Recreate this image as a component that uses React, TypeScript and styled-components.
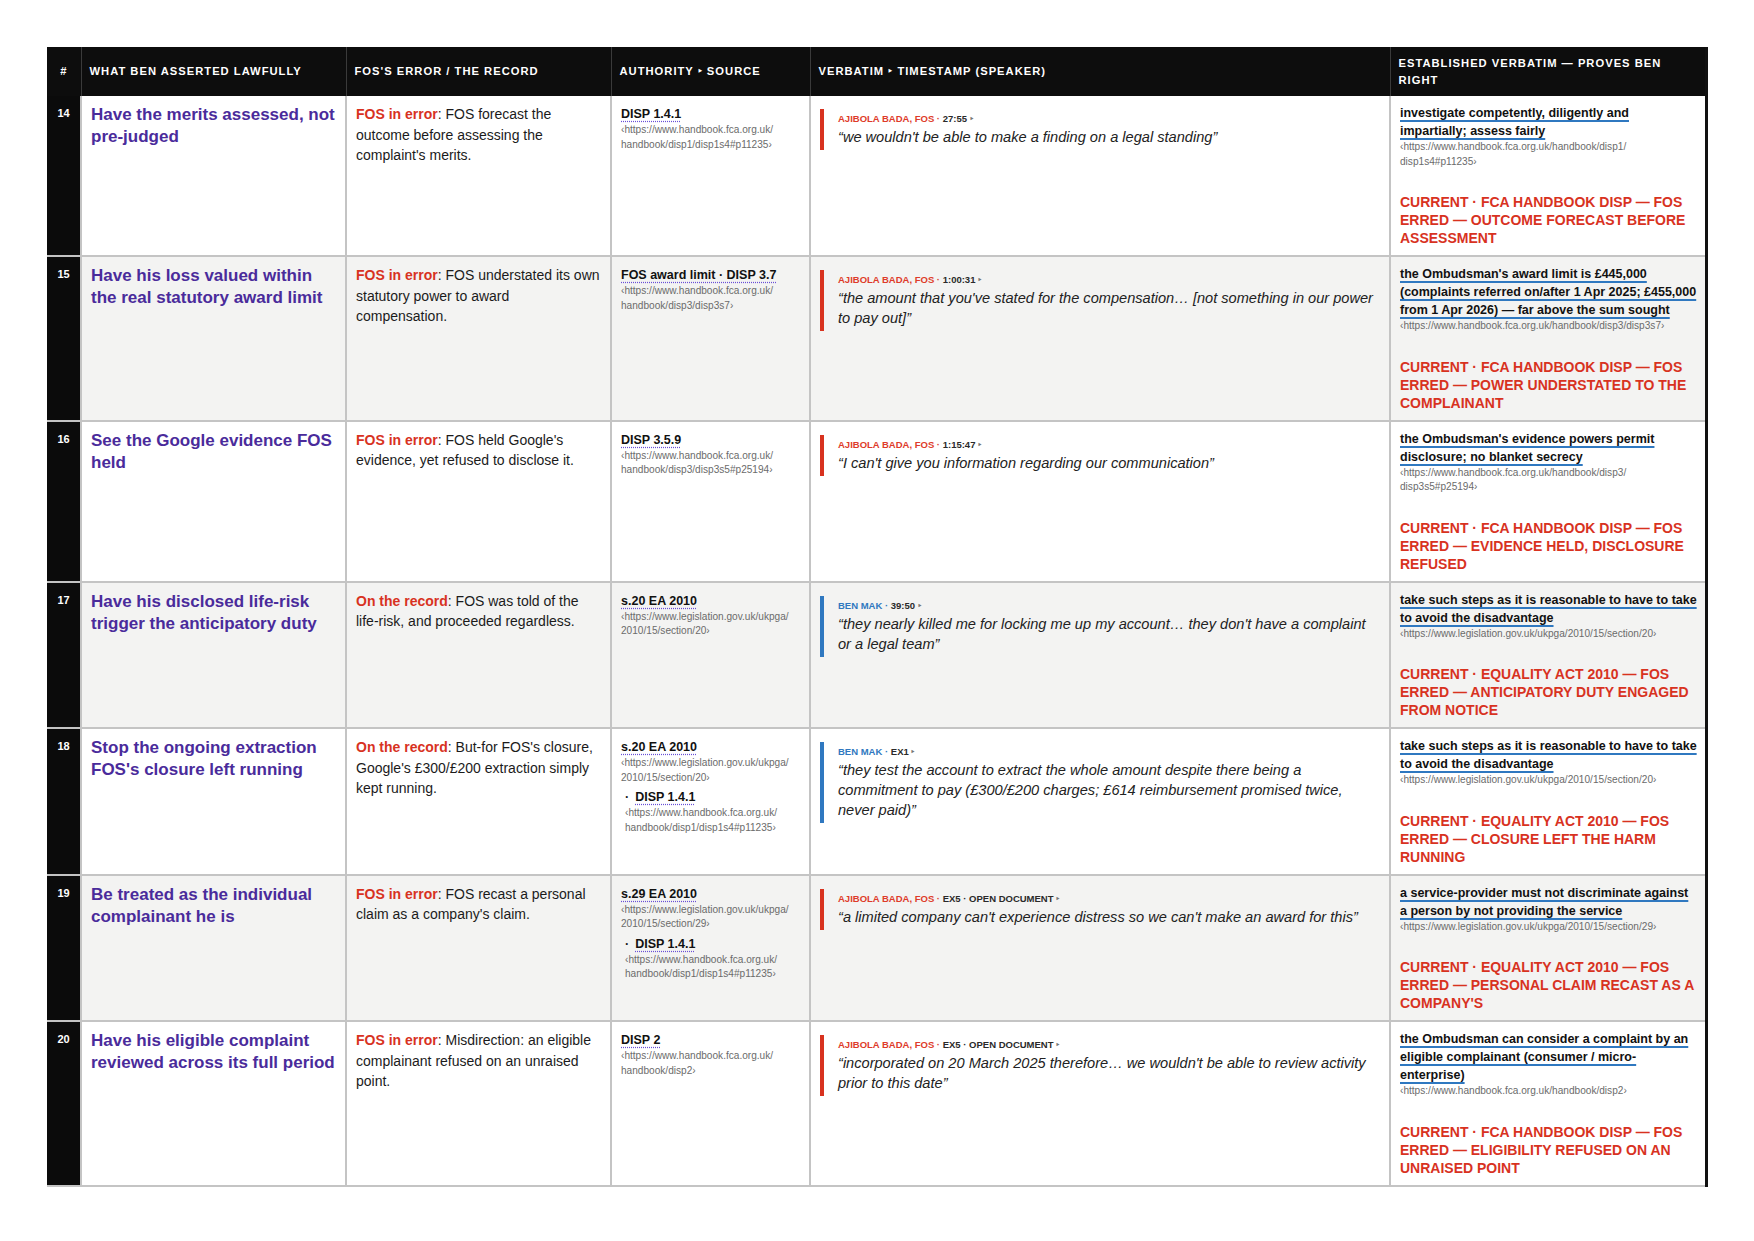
import React from 'react';
import styled, { createGlobalStyle } from 'styled-components';

const RED = '#d8321f';
const BLUE = '#2f78c0';
const PURPLE = '#4a2b9b';

type Speaker = 'fos' | 'ben';

interface Authority {
  title: string;
  url: string;
}

interface Row {
  n: number;
  claim: string;
  tag: string;
  error: string;
  authorities: Authority[];
  speaker: Speaker;
  stamp: string;
  quote: string;
  established: string;
  estUrl: string;
  verdict: string;
}

const FCA1 = 'https://www.handbook.fca.org.uk/handbook/disp1/disp1s4#p11235';
const S20 = 'https://www.legislation.gov.uk/ukpga/2010/15/section/20';

const rows: Row[] = [
  {
    n: 14,
    claim: 'Have the merits assessed, not pre-judged',
    tag: 'FOS in error',
    error: 'FOS forecast the outcome before assessing the complaint\'s merits.',
    authorities: [{ title: 'DISP 1.4.1', url: FCA1 }],
    speaker: 'fos',
    stamp: '27:55',
    quote: 'we wouldn\'t be able to make a finding on a legal standing',
    established: 'investigate competently, diligently and impartially; assess fairly',
    estUrl: FCA1,
    verdict: 'CURRENT · FCA HANDBOOK DISP — FOS ERRED — OUTCOME FORECAST BEFORE ASSESSMENT',
  },
  {
    n: 15,
    claim: 'Have his loss valued within the real statutory award limit',
    tag: 'FOS in error',
    error: 'FOS understated its own statutory power to award compensation.',
    authorities: [
      { title: 'FOS award limit · DISP 3.7', url: 'https://www.handbook.fca.org.uk/handbook/disp3/disp3s7' },
    ],
    speaker: 'fos',
    stamp: '1:00:31',
    quote: 'the amount that you\'ve stated for the compensation… [not something in our power to pay out]',
    established:
      'the Ombudsman\'s award limit is £445,000 (complaints referred on/after 1 Apr 2025; £455,000 from 1 Apr 2026) — far above the sum sought',
    estUrl: 'https://www.handbook.fca.org.uk/handbook/disp3/disp3s7',
    verdict: 'CURRENT · FCA HANDBOOK DISP — FOS ERRED — POWER UNDERSTATED TO THE COMPLAINANT',
  },
  {
    n: 16,
    claim: 'See the Google evidence FOS held',
    tag: 'FOS in error',
    error: 'FOS held Google\'s evidence, yet refused to disclose it.',
    authorities: [
      { title: 'DISP 3.5.9', url: 'https://www.handbook.fca.org.uk/handbook/disp3/disp3s5#p25194' },
    ],
    speaker: 'fos',
    stamp: '1:15:47',
    quote: 'I can\'t give you information regarding our communication',
    established: 'the Ombudsman\'s evidence powers permit disclosure; no blanket secrecy',
    estUrl: 'https://www.handbook.fca.org.uk/handbook/disp3/disp3s5#p25194',
    verdict: 'CURRENT · FCA HANDBOOK DISP — FOS ERRED — EVIDENCE HELD, DISCLOSURE REFUSED',
  },
  {
    n: 17,
    claim: 'Have his disclosed life-risk trigger the anticipatory duty',
    tag: 'On the record',
    error: 'FOS was told of the life-risk, and proceeded regardless.',
    authorities: [{ title: 's.20 EA 2010', url: S20 }],
    speaker: 'ben',
    stamp: '39:50',
    quote: 'they nearly killed me for locking me up my account… they don\'t have a complaint or a legal team',
    established: 'take such steps as it is reasonable to have to take to avoid the disadvantage',
    estUrl: S20,
    verdict: 'CURRENT · EQUALITY ACT 2010 — FOS ERRED — ANTICIPATORY DUTY ENGAGED FROM NOTICE',
  },
  {
    n: 18,
    claim: 'Stop the ongoing extraction FOS\'s closure left running',
    tag: 'On the record',
    error: 'But-for FOS\'s closure, Google\'s £300/£200 extraction simply kept running.',
    authorities: [
      { title: 's.20 EA 2010', url: S20 },
      { title: 'DISP 1.4.1', url: FCA1 },
    ],
    speaker: 'ben',
    stamp: 'EX1',
    quote:
      'they test the account to extract the whole amount despite there being a commitment to pay (£300/£200 charges; £614 reimbursement promised twice, never paid)',
    established: 'take such steps as it is reasonable to have to take to avoid the disadvantage',
    estUrl: S20,
    verdict: 'CURRENT · EQUALITY ACT 2010 — FOS ERRED — CLOSURE LEFT THE HARM RUNNING',
  },
  {
    n: 19,
    claim: 'Be treated as the individual complainant he is',
    tag: 'FOS in error',
    error: 'FOS recast a personal claim as a company\'s claim.',
    authorities: [
      { title: 's.29 EA 2010', url: 'https://www.legislation.gov.uk/ukpga/2010/15/section/29' },
      { title: 'DISP 1.4.1', url: FCA1 },
    ],
    speaker: 'fos',
    stamp: 'EX5 · OPEN DOCUMENT',
    quote: 'a limited company can\'t experience distress so we can\'t make an award for this',
    established: 'a service-provider must not discriminate against a person by not providing the service',
    estUrl: 'https://www.legislation.gov.uk/ukpga/2010/15/section/29',
    verdict: 'CURRENT · EQUALITY ACT 2010 — FOS ERRED — PERSONAL CLAIM RECAST AS A COMPANY\'S',
  },
  {
    n: 20,
    claim: 'Have his eligible complaint reviewed across its full period',
    tag: 'FOS in error',
    error: 'Misdirection: an eligible complainant refused on an unraised point.',
    authorities: [{ title: 'DISP 2', url: 'https://www.handbook.fca.org.uk/handbook/disp2' }],
    speaker: 'fos',
    stamp: 'EX5 · OPEN DOCUMENT',
    quote: 'incorporated on 20 March 2025 therefore… we wouldn\'t be able to review activity prior to this date',
    established:
      'the Ombudsman can consider a complaint by an eligible complainant (consumer / micro-enterprise)',
    estUrl: 'https://www.handbook.fca.org.uk/handbook/disp2',
    verdict: 'CURRENT · FCA HANDBOOK DISP — FOS ERRED — ELIGIBILITY REFUSED ON AN UNRAISED POINT',
  },
];

// lets long urls wrap after each slash, like the printed sheet
const breakable = (url: string) => {
  const parts = url.split('/');
  return parts.map((p, i) => (
    <React.Fragment key={i}>
      {p}
      {i < parts.length - 1 && (
        <>
          /<wbr />
        </>
      )}
    </React.Fragment>
  ));
};

const App: React.FC = () => {
  return (
    <>
      <GlobalStyle />
      <Page>
        <Table>
          <colgroup>
            <col style={{ width: 34 }} />
            <col style={{ width: 265 }} />
            <col style={{ width: 265 }} />
            <col style={{ width: 199 }} />
            <col style={{ width: 580 }} />
            <col style={{ width: 316 }} />
          </colgroup>
          <thead>
            <tr>
              <Th>#</Th>
              <Th>What Ben asserted lawfully</Th>
              <Th>FOS's error / the record</Th>
              <Th>Authority ‣ Source</Th>
              <Th>Verbatim ‣ Timestamp (speaker)</Th>
              <Th>Established verbatim — proves Ben right</Th>
            </tr>
          </thead>
          <tbody>
            {rows.map((r, idx) => (
              <Tr key={r.n} $shaded={idx % 2 === 1}>
                <NumCell>{r.n}</NumCell>
                <Td>
                  <Claim>{r.claim}</Claim>
                </Td>
                <Td>
                  <ErrorText>
                    <Tag>{r.tag}</Tag>: {r.error}
                  </ErrorText>
                </Td>
                <Td>
                  {r.authorities.map((a, i) => (
                    <AuthBlock key={i} $follow={i > 0}>
                      {i > 0 && <AuthSep>·</AuthSep>}
                      <AuthTitle>{a.title}</AuthTitle>
                      <Url>‹{breakable(a.url)}›</Url>
                    </AuthBlock>
                  ))}
                </Td>
                <Td>
                  <Quote $speaker={r.speaker}>
                    <SpeakerLine>
                      <SpeakerName $speaker={r.speaker}>
                        {r.speaker === 'fos' ? 'Ajibola Bada, FOS' : 'Ben Mak'} ·
                      </SpeakerName>{' '}
                      <Stamp>
                        {r.stamp} <Caret>‣</Caret>
                      </Stamp>
                    </SpeakerLine>
                    <QuoteText>“{r.quote}”</QuoteText>
                  </Quote>
                </Td>
                <EstCell>
                  <Established>
                    <EstText>{r.established}</EstText>
                    <Url>‹{breakable(r.estUrl)}›</Url>
                    <Verdict>{r.verdict}</Verdict>
                  </Established>
                </EstCell>
              </Tr>
            ))}
          </tbody>
        </Table>
      </Page>
    </>
  );
};

const GlobalStyle = createGlobalStyle`
  html, body {
    margin: 0;
    padding: 0;
    background: #ffffff;
  }
  body {
    font-family: "Liberation Sans", Arial, sans-serif;
    color: #1b1b1b;
  }
`;

const Page = styled.div`
  padding: 47px 0 40px 47px;
  width: 1754px;
  box-sizing: border-box;
`;

const Table = styled.table`
  width: 1659px;
  table-layout: fixed;
  border-collapse: collapse;
  border-right: 3px solid #111111;
`;

const Th = styled.th`
  background: #0d0d0d;
  color: #ffffff;
  font-size: 11.2px;
  font-weight: 700;
  letter-spacing: 0.09em;
  text-transform: uppercase;
  text-align: left;
  line-height: 17px;
  height: 49px;
  padding: 7px 8px;
  box-sizing: border-box;
  vertical-align: middle;
  border-left: 1px solid #3a3a3a;

  &:first-child {
    text-align: center;
    padding: 7px 0;
    border-left: none;
  }
`;

const Tr = styled.tr<{ $shaded: boolean }>`
  background: ${(p) => (p.$shaded ? '#f3f3f2' : '#ffffff')};
  border-bottom: 2px solid #c4c4c4;
`;

const Td = styled.td`
  vertical-align: top;
  padding: 8px 9px;
  border-left: 2px solid #c4c4c4;
`;

const EstCell = styled(Td)`
  padding-right: 7px;
`;

const NumCell = styled.td`
  vertical-align: top;
  background: #0b0b0b;
  color: #ffffff;
  font-size: 11px;
  font-weight: 700;
  text-align: center;
  line-height: 17px;
  padding: 9px 0 0;
`;

const Claim = styled.div`
  color: ${PURPLE};
  font-size: 17px;
  font-weight: 700;
  line-height: 22px;
`;

const ErrorText = styled.div`
  font-size: 14px;
  line-height: 20.5px;
  color: #1b1b1b;
`;

const Tag = styled.span`
  color: ${RED};
  font-weight: 700;
`;

const AuthBlock = styled.div<{ $follow: boolean }>`
  padding-left: ${(p) => (p.$follow ? '4px' : '0')};
  margin-top: ${(p) => (p.$follow ? '2px' : '0')};
`;

const AuthSep = styled.span`
  font-size: 12.5px;
  font-weight: 700;
  margin-right: 6px;
`;

const AuthTitle = styled.span`
  font-size: 12.5px;
  font-weight: 700;
  line-height: 17px;
  color: #111111;
  text-decoration: underline dotted #6a4fd6;
  text-underline-offset: 3px;
`;

const Url = styled.div`
  font-size: 10.1px;
  line-height: 14.5px;
  color: #6b6b6b;
`;

const Quote = styled.div<{ $speaker: Speaker }>`
  margin-top: 5px;
  padding: 3px 0 3px 14px;
  border-left: 4px solid ${(p) => (p.$speaker === 'fos' ? RED : BLUE)};
`;

const SpeakerLine = styled.div`
  font-size: 9.5px;
  font-weight: 700;
  text-transform: uppercase;
  line-height: 13px;
`;

const SpeakerName = styled.span<{ $speaker: Speaker }>`
  color: ${(p) => (p.$speaker === 'fos' ? '#de3b2a' : BLUE)};
`;

const Stamp = styled.span`
  color: #2a2a2a;
`;

const Caret = styled.span`
  color: #777777;
`;

const QuoteText = styled.div`
  margin-top: 2px;
  font-size: 14.6px;
  font-style: italic;
  line-height: 20px;
  color: #222222;
`;

const Established = styled.div`
  display: flex;
  flex-direction: column;
`;

const EstText = styled.div`
  font-size: 12.5px;
  font-weight: 700;
  line-height: 18px;
  color: #111111;
  text-decoration: underline solid ${BLUE};
  text-decoration-thickness: 2px;
  text-underline-offset: 3px;
`;

const Verdict = styled.div`
  margin-top: 24px;
  color: ${RED};
  font-size: 14px;
  font-weight: 700;
  line-height: 18px;
  text-transform: uppercase;
`;

export default App;
